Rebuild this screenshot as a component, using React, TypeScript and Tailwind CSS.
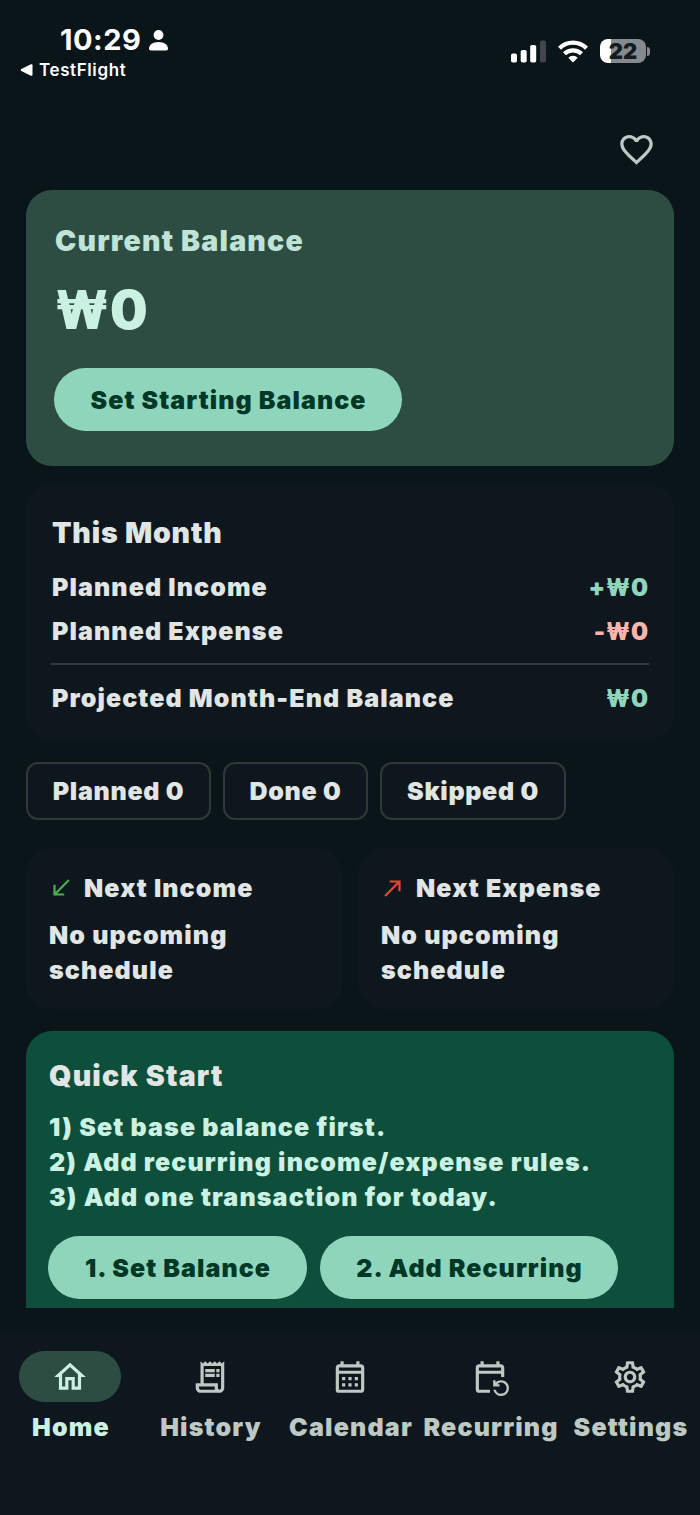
import type { ReactNode } from "react"
import type { IconType } from "react-icons"
import {
  MdFavoriteBorder,
  MdNorthEast,
  MdOutlineCalendarMonth,
  MdOutlineEventRepeat,
  MdOutlineHome,
  MdOutlineReceiptLong,
  MdOutlineSettings,
  MdSouthWest,
} from "react-icons/md"

const monthRows = [
  { label: "Planned Income", sign: "+", color: "text-[#8fd5bb]" },
  { label: "Planned Expense", sign: "-", color: "text-[#ffb4ab]" },
]

const chips = [
  { label: "Planned 0", width: "w-[185px]" },
  { label: "Done 0", width: "w-[145px]" },
  { label: "Skipped 0", width: "w-[186px]" },
]

const upcoming = [
  { title: "Next Income", icon: MdSouthWest, color: "text-[#4caf50]" },
  { title: "Next Expense", icon: MdNorthEast, color: "text-[#f44336]" },
]

const quickSteps = [
  "1) Set base balance first.",
  "2) Add recurring income/expense rules.",
  "3) Add one transaction for today.",
]

const tabs: { label: string; icon: IconType; active?: boolean }[] = [
  { label: "Home", icon: MdOutlineHome, active: true },
  { label: "History", icon: MdOutlineReceiptLong },
  { label: "Calendar", icon: MdOutlineCalendarMonth },
  { label: "Recurring", icon: MdOutlineEventRepeat },
  { label: "Settings", icon: MdOutlineSettings },
]

function PillButton({ className, children }: { className: string; children: ReactNode }) {
  return (
    <button
      className={`flex h-[63px] shrink-0 items-center justify-center whitespace-nowrap rounded-full bg-[#8fd5bb] pl-px pt-0.5 tracking-[1.05px] text-[#003827] ${className}`}
    >
      {children}
    </button>
  )
}

// Amount in won, with the currency sign set slightly condensed
function Amount({ sign = "", className = "" }: { sign?: string; className?: string }) {
  return (
    <span className={`-mr-px whitespace-nowrap text-[24px] tracking-[1px] ${className}`}>
      {sign}
      <span className="-ml-[3px] inline-block origin-right scale-x-[0.88]">₩</span>0
    </span>
  )
}

function StatusBar() {
  return (
    <div className="flex h-[120px] items-start justify-between pl-5 pr-[50px] font-semibold tracking-normal text-white">
      <div className="pt-6">
        <div className="flex h-8 items-center pl-10">
          <span className="text-[29px] font-bold leading-8 tracking-[0.5px]">10:29</span>
          <svg className="ml-[8px] h-[21px] w-[19px]" viewBox="0 0 19 21" fill="currentColor">
            <circle cx="9.5" cy="5" r="4.9" />
            <path d="M0 18.6C0 14.8 4.2 12 9.5 12s9.5 2.8 9.5 6.6c0 1.2-.7 1.9-2 1.9H2c-1.3 0-2-.7-2-1.9Z" />
          </svg>
        </div>
        <div className="flex h-7 items-center">
          <svg className="mr-[6px] h-3 w-[13px]" viewBox="0 0 12 12" fill="currentColor">
            <path d="M.9 5 10.4.3c.9-.4 1.6 0 1.6 1v9.4c0 1-.7 1.4-1.6 1L.9 7C0 6.500 0 5.500.9 5Z" />
          </svg>
          <span className="text-[17px] leading-7 tracking-[0.6px]">TestFlight</span>
        </div>
      </div>

      <div className="flex items-center pt-[39px]">
        <svg className="mr-3 h-[23px] w-[35px]" viewBox="0 0 35 23" fill="currentColor">
          <rect x="0" y="13.500" width="6" height="9" rx="1.800" />
          <rect x="9.700" y="10" width="6" height="12.500" rx="1.800" />
          <rect x="19.200" y="5" width="6" height="17.500" rx="1.800" />
          <rect x="29" y="0.500" width="6" height="22" rx="1.800" fill="#41454c" />
        </svg>
        <svg className="mr-3 h-[23px] w-[30px]" viewBox="0 0 30 23" fill="none" stroke="currentColor" strokeWidth="4.300">
          <path d="M1.500 8.200a19.200 19.200 0 0 1 27 0" />
          <path d="M6.500 13.800a12.200 12.200 0 0 1 17 0" />
          <path d="M15 22.500 10.300 17.700a6.600 6.600 0 0 1 9.400 0Z" fill="currentColor" stroke="none" />
        </svg>
        <div className="flex h-6 w-[46px] items-center justify-center rounded-lg bg-linear-to-r from-white from-24% to-[#868a8e] to-24% text-[22px] font-black leading-6 text-[#111c23]">
          22
        </div>
        <div className="ml-px h-[9px] w-[3px] rounded-r-full bg-[#868a8e]" />
      </div>
    </div>
  )
}

function BalanceCard() {
  return (
    <section className="h-[276px] rounded-[26px] bg-[#2d4d42] px-[28px] pt-[33px]">
      <h2 className="pl-px text-[28.5px] leading-9 tracking-[1.2px] text-[#bfe3d6]">Current Balance</h2>
      <p className="mt-[21px] pl-px text-[53px] leading-[60px] text-[#cbf1e3]">
        <span className="-mr-[5px] inline-block origin-left scale-x-[0.91]">₩</span>0
      </p>
      <PillButton className="mt-7 w-[348px]">Set Starting Balance</PillButton>
    </section>
  )
}

function MonthCard() {
  return (
    <section className="mt-[18px] h-[256px] rounded-[26px] bg-[#0f171e] px-[25px] pt-[31px]">
      <h2 className="pl-px text-[28.5px] leading-9 tracking-[0.8px]">This Month</h2>
      <div className="mt-[15px]">
        {monthRows.map((row) => (
          <div key={row.label} className="flex h-11 items-center justify-between px-px">
            <span>{row.label}</span>
            <Amount sign={row.sign} className={row.color} />
          </div>
        ))}
      </div>
      <div className="mt-[9px] h-0.5 bg-[#323a3f]" />
      <div className="flex h-[68px] items-center justify-between px-px">
        <span>Projected Month-End Balance</span>
        <Amount className="text-[#8fd5bb]" />
      </div>
    </section>
  )
}

function QuickStart() {
  return (
    <section className="mt-[22px] h-[277px] overflow-hidden rounded-t-[26px] bg-[#0d4f3a] px-[22px] pt-[27px]">
      <h2 className="pl-px text-[28.5px] leading-9 tracking-[1.2px]">Quick Start</h2>
      <ul className="mt-[16px] pl-px leading-[35px] tracking-[1.13px] text-[#cbf1e3]">
        {quickSteps.map((step) => (
          <li key={step}>{step}</li>
        ))}
      </ul>
      <div className="mt-[21px] flex gap-[13px]">
        <PillButton className="w-[259px]">1. Set Balance</PillButton>
        <PillButton className="w-[298px]">2. Add Recurring</PillButton>
      </div>
    </section>
  )
}

function TabBar() {
  return (
    <nav className="mt-[25px] grid h-[182px] grid-cols-5 bg-[#0f171e] pt-[18px]">
      {tabs.map((tab) => {
        const Icon = tab.icon
        return (
          <div
            key={tab.label}
            className={`flex flex-col items-center ${tab.active ? "text-[#cbf1e3]" : "text-[#bfc9c4]"}`}
          >
            <div
              className={`flex h-[51px] w-[102px] items-center justify-center rounded-full ${tab.active ? "bg-[#2d4d42]" : ""}`}
            >
              <Icon className="size-[38px]" />
            </div>
            <span className="mt-[9px] whitespace-nowrap pl-0.5 leading-8 tracking-[1.2px]">{tab.label}</span>
          </div>
        )
      })}
    </nav>
  )
}

export default function App() {
  return (
    <div className="h-[1515px] w-[700px] overflow-hidden bg-[#0a151a] font-['Inter',sans-serif] text-[25px] font-black tracking-[1.1px] text-[#e1e6e5]">
      <StatusBar />

      <header className="flex h-[70px] justify-end pr-[44px] pt-[10px]">
        <MdFavoriteBorder className="size-[39px] text-[#bfc9c4]" />
      </header>

      <main className="px-[26px]">
        <BalanceCard />
        <MonthCard />

        {/* Status counts */}
        <div className="mt-[22px] flex gap-3">
          {chips.map((chip) => (
            <div
              key={chip.label}
              className={`flex h-[58px] items-center justify-center rounded-xl border-2 border-[#303938] bg-[#0f171e] pt-0.5 tracking-[0.7px] ${chip.width}`}
            >
              {chip.label}
            </div>
          ))}
        </div>

        {/* Next scheduled items */}
        <div className="mt-7 grid grid-cols-2 gap-4">
          {upcoming.map((item) => {
            const Icon = item.icon
            return (
              <div key={item.title} className="h-[161px] rounded-[26px] bg-[#0f171e] pl-[22px] pt-6">
                <div className="flex h-8 items-center">
                  <Icon className={`size-[26px] ${item.color}`} />
                  <span className="ml-[10px] pt-0.5">{item.title}</span>
                </div>
                <p className="mt-[14px] w-[220px] pl-px leading-[35px]">No upcoming schedule</p>
              </div>
            )
          })}
        </div>

        <QuickStart />
      </main>

      <TabBar />
    </div>
  )
}
